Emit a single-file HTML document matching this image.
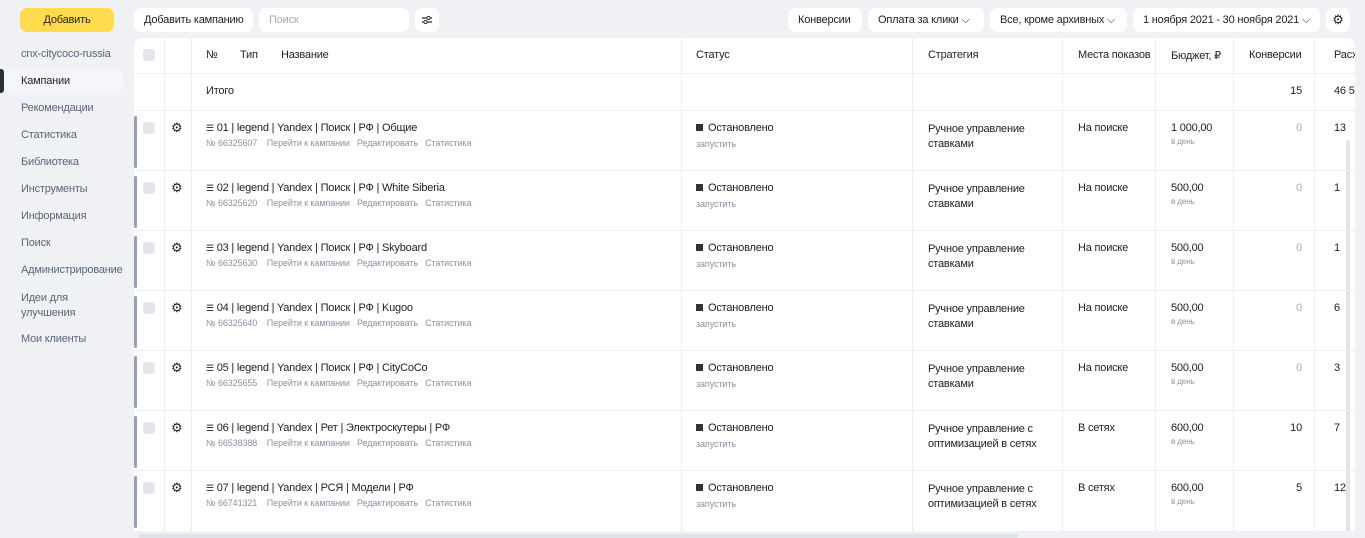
<!DOCTYPE html><html><head><meta charset="utf-8"><style>
*{box-sizing:border-box;margin:0;padding:0}
body{width:1365px;height:538px;overflow:hidden;background:#eff1f5;font-family:"Liberation Sans",sans-serif;font-size:11px;color:#222;position:relative;letter-spacing:-0.2px}
.a{position:absolute}
.btn{position:absolute;top:8px;height:24px;background:#fff;border-radius:7px;font-size:11px;line-height:24px;padding:0 10px;color:#222;white-space:nowrap}
.nav{position:absolute;left:21px;font-size:11px;color:#5a6578}
.tbl{position:absolute;left:134px;top:38px;width:1221px;height:493px;background:#fff;border-radius:8px 8px 0 0;overflow:hidden}
.v{position:absolute;top:0;bottom:0;width:1px;background:#eceef2}
.h{position:absolute;left:0;right:0;height:1px;background:#eceef2}
.cb{position:absolute;left:9px;width:12px;height:12px;background:#e4e6ec;border-radius:3px}
.t{position:absolute;white-space:nowrap}
.s{color:#8a93a3;font-size:9px;letter-spacing:-0.1px}
.g{color:#aaa}
.bar{position:absolute;left:0;width:3px;height:52px;background:#98a0ad;border-radius:2px}
</style></head><body>
<div class="a" style="left:20px;top:8px;width:94px;height:24px;background:#ffdb4d;border-radius:7px;text-align:center;line-height:24px;font-size:11px">Добавить</div>
<div class="btn" style="left:134px;width:119px">Добавить кампанию</div>
<div class="btn" style="left:259px;width:150px;color:#aaa">Поиск</div>
<div class="btn" style="left:415px;width:24px;padding:0;text-align:center">
<svg width="12" height="12" viewBox="0 0 12 12" style="margin-top:6px"><path d="M1 4h10M1 8h10" stroke="#333" stroke-width="1.2"/><circle cx="7.5" cy="4" r="1.6" fill="#fff" stroke="#333"/><circle cx="4.5" cy="8" r="1.6" fill="#fff" stroke="#333"/></svg></div>
<div class="btn" style="left:788px;width:74px">Конверсии</div>
<div class="btn" style="left:868px;width:116px">Оплата за клики ⌵</div>
<div class="btn" style="left:990px;width:137px">Все, кроме архивных ⌵</div>
<div class="btn" style="left:1133px;width:187px">1 ноября 2021 - 30 ноября 2021 ⌵</div>
<div class="btn" style="left:1326px;width:24px;padding:0;text-align:center;font-size:13px">⚙</div>
<div class="nav" style="top:48px">cnx-citycoco-russia</div>
<div class="a" style="left:0;top:69px;width:4px;height:24px;background:#2b2f3a;border-radius:0 3px 3px 0"></div>
<div class="a" style="left:4px;top:69px;width:120px;height:24px;background:#f5f6f9;border-radius:8px"></div>
<div class="nav" style="top:75px;color:#222">Кампании</div>
<div class="nav" style="top:102px">Рекомендации</div>
<div class="nav" style="top:129px">Статистика</div>
<div class="nav" style="top:156px">Библиотека</div>
<div class="nav" style="top:183px">Инструменты</div>
<div class="nav" style="top:210px">Информация</div>
<div class="nav" style="top:237px">Поиск</div>
<div class="nav" style="top:264px">Администрирование</div>
<div class="nav" style="top:291px;line-height:15px">Идеи для<br>улучшения</div>
<div class="nav" style="top:333px">Мои клиенты</div>
<div class="tbl">
<div class="v" style="left:30px"></div><div class="v" style="left:57px"></div><div class="v" style="left:547px"></div><div class="v" style="left:778px"></div><div class="v" style="left:928px"></div><div class="v" style="left:1021px"></div><div class="v" style="left:1099px"></div><div class="v" style="left:1180px"></div>
<div class="h" style="top:35px"></div><div class="h" style="top:72px"></div>
<div class="cb" style="top:11px"></div>
<div class="t" style="left:72px;top:11px">№</div><div class="t" style="left:106px;top:11px">Тип</div><div class="t" style="left:147px;top:11px">Название</div>
<div class="t" style="left:562px;top:11px">Статус</div><div class="t" style="left:794px;top:11px">Стратегия</div><div class="t" style="left:944px;top:11px">Места показов</div><div class="t" style="left:1037px;top:11px">Бюджет, ₽</div><div class="t" style="left:1115px;top:11px">Конверсии</div><div class="t" style="left:1200px;top:11px">Расх</div>
<div class="t" style="left:72px;top:47px">Итого</div><div class="t" style="right:53px;top:47px">15</div><div class="t" style="left:1200px;top:47px">46 50</div>
<div class="a" style="left:1212px;top:102px;width:4px;height:400px;background:#e2e4e9;border-radius:2px"></div>
<div id="rows"></div>
</div>
<div class="a" style="left:138px;top:534px;width:880px;height:4px;background:#dfe2e8;border-radius:2px"></div>
<script>
var d=[["01 | legend | Yandex | Поиск | РФ | Общие","66325607","ставками","На поиске","1 000,00","0","13"],
["02 | legend | Yandex | Поиск | РФ | White Siberia","66325620","ставками","На поиске","500,00","0","1"],
["03 | legend | Yandex | Поиск | РФ | Skyboard","66325630","ставками","На поиске","500,00","0","1"],
["04 | legend | Yandex | Поиск | РФ | Kugoo","66325640","ставками","На поиске","500,00","0","6"],
["05 | legend | Yandex | Поиск | РФ | CityCoCo","66325655","ставками","На поиске","500,00","0","3"],
["06 | legend | Yandex | Рет | Электроскутеры | РФ","66538388","оптимизацией в сетях","В сетях","600,00","10","7"],
["07 | legend | Yandex | РСЯ | Модели | РФ","66741321","оптимизацией в сетях","В сетях","600,00","5","12"]];
var h="";d.forEach(function(r,i){var y=72+i*60;var c6=r[5]=="0"?"g":"";
h+='<div class="bar" style="top:'+(y+6)+'px"></div><div class="cb" style="top:'+(y+12)+'px"></div>'+
'<div class="t" style="left:37px;top:'+(y+10)+'px;font-size:13px">⚙</div>'+
'<div class="t" style="left:72px;top:'+(y+12)+'px"><span style="font-size:9px">☰</span> '+r[0]+'</div>'+
'<div class="t s" style="left:72px;top:'+(y+28)+'px">№ '+r[1]+'&nbsp;&nbsp;&nbsp;&nbsp;Перейти к кампании&nbsp;&nbsp;&nbsp;Редактировать&nbsp;&nbsp;&nbsp;Статистика</div>'+
'<div class="t" style="left:562px;top:'+(y+12)+'px"><span style="display:inline-block;width:7px;height:7px;background:#333;margin-right:5px"></span>Остановлено</div>'+
'<div class="t s" style="left:562px;top:'+(y+29)+'px">запустить</div>'+
'<div class="t" style="left:794px;top:'+(y+12)+'px;line-height:15px">Ручное управление'+(r[2]=="ставками"?"":" с")+'<br>'+r[2]+'</div>'+
'<div class="t" style="left:944px;top:'+(y+12)+'px">'+r[3]+'</div>'+
'<div class="t" style="left:1037px;top:'+(y+12)+'px">'+r[4]+'</div><div class="t s" style="left:1037px;top:'+(y+27)+'px;font-size:8px">в день</div>'+
'<div class="t '+c6+'" style="right:53px;top:'+(y+12)+'px">'+r[5]+'</div>'+
'<div class="t" style="left:1200px;top:'+(y+12)+'px">'+r[6]+'</div>';
if(i<6)h+='<div class="h" style="top:'+(y+60)+'px"></div>';});
document.getElementById("rows").innerHTML=h;
</script>
</body></html>
